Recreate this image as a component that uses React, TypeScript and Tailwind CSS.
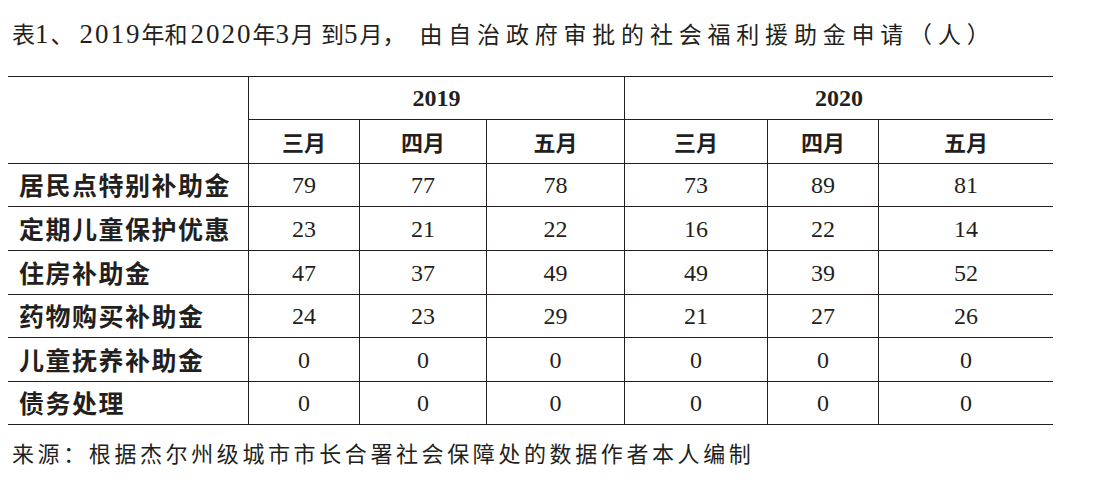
import React from "react";

const rows: [string, number[]][] = [
  ["居民点特别补助金", [79, 77, 78, 73, 89, 81]],
  ["定期儿童保护优惠", [23, 21, 22, 16, 22, 14]],
  ["住房补助金", [47, 37, 49, 49, 39, 52]],
  ["药物购买补助金", [24, 23, 29, 21, 27, 26]],
  ["儿童抚养补助金", [0, 0, 0, 0, 0, 0]],
  ["债务处理", [0, 0, 0, 0, 0, 0]],
];

const rowHeights = ["h-[43px]", "h-[44px]", "h-[44px]", "h-[43px]", "h-[44px]", "h-[43px]"];

const months = ["三月", "四月", "五月", "三月", "四月", "五月"];

function Num({ children, extra = "" }: { children: React.ReactNode; extra?: string }) {
  return <span className={"text-[27px] tracking-[2px] " + extra}>{children}</span>;
}

function Cjk({ children, extra = "" }: { children: React.ReactNode; extra?: string }) {
  return <span className={"font-['Noto_Sans_CJK_SC',sans-serif] " + extra}>{children}</span>;
}

export default function App() {
  return (
    <div className="w-[1098px] h-[492px] bg-white text-[#231f20] overflow-hidden font-['Liberation_Serif','Noto_Sans_CJK_SC',serif]">
      <div className="pl-[12px] pt-[17px] h-[49px] leading-[32px] text-[23px] whitespace-nowrap">
        <Cjk>表</Cjk>
        <Num>1</Num>
        <Cjk>、</Cjk>
        <Num extra="ml-[6px]">2019</Num>
        <Cjk>年和</Cjk>
        <Num extra="ml-[3px]">2020</Num>
        <Cjk>年</Cjk>
        <Num>3</Num>
        <Cjk>月</Cjk>
        <Cjk extra="ml-[7px]">到</Cjk>
        <Num>5</Num>
        <Cjk>月，</Cjk>
        <Cjk extra="tracking-[5.8px] ml-[14px]">由自治政府审批的社会福利援助金申请（人）</Cjk>
      </div>

      <div className="mt-[27px] ml-[8px] w-[1045px] border-t border-[#231f20] grid grid-cols-[240px_111px_127px_138px_143px_111px_175px]">
        <div className="row-span-2 border-b border-[#231f20]" />
        <div className="col-span-3 h-[43px] border-b border-l border-[#231f20] flex items-center justify-center font-bold text-[24px]">
          2019
        </div>
        <div className="col-span-3 h-[43px] border-b border-l border-[#231f20] flex items-center justify-center font-bold text-[24px]">
          2020
        </div>
        {months.map((m, i) => (
          <div
            key={i}
            className="h-[44px] border-b border-l border-[#231f20] flex items-center justify-center font-bold text-[22px] font-['Noto_Sans_CJK_SC',sans-serif]"
          >
            {m}
          </div>
        ))}
        {rows.map(([label, vals], r) => (
          <React.Fragment key={r}>
            <div
              className={
                rowHeights[r] +
                " border-b border-[#231f20] flex items-center pl-[11px] font-bold text-[25px] tracking-[1.5px] font-['Noto_Sans_CJK_SC',sans-serif]"
              }
            >
              {label}
            </div>
            {vals.map((v, c) => (
              <div
                key={c}
                className={rowHeights[r] + " border-b border-l border-[#231f20] flex items-center justify-center text-[24px]"}
              >
                {v}
              </div>
            ))}
          </React.Fragment>
        ))}
      </div>

      <div className="pl-[12px] mt-[14px] leading-[32px] text-[22px] tracking-[3.6px] whitespace-nowrap">
        来源：根据杰尔州级城市市长合署社会保障处的数据作者本人编制
      </div>
    </div>
  );
}
